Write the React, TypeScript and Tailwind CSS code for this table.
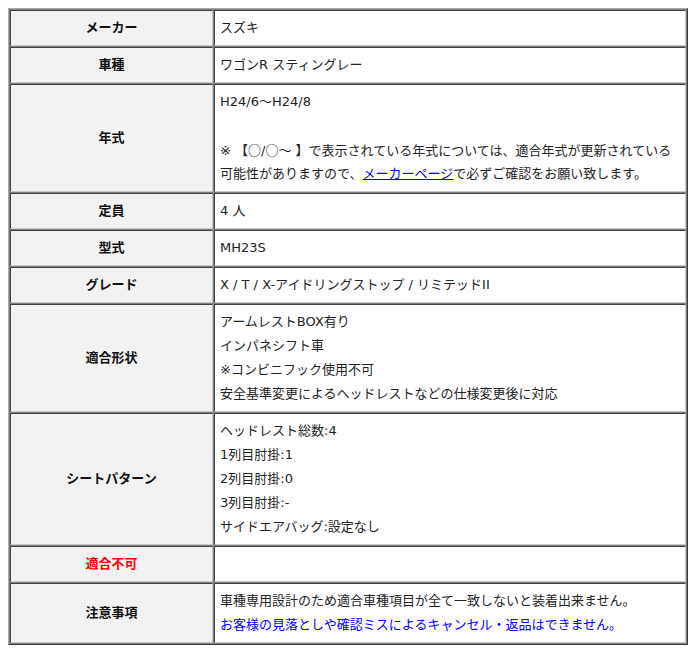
import React from "react";

const font = { fontFamily: '"DejaVu Sans", "Noto Sans CJK JP", sans-serif' };

function Row({
  label,
  children,
  red,
}: {
  label: string;
  children?: React.ReactNode;
  red?: boolean;
}) {
  return (
    <tr>
      <th
        className={`w-[203px] bg-[#f2f2f2] border border-t-[#404040] border-l-[#404040] border-b-[#c8c8c8] border-r-[#c8c8c8] px-[5px] py-[5px] text-center align-middle font-bold text-[13px] leading-[24px] ${
          red ? "text-[#ff0000]" : "text-[#111]"
        }`}
      >
        {label}
      </th>
      <td className="bg-white border border-t-[#404040] border-l-[#404040] border-b-[#c8c8c8] border-r-[#c8c8c8] pl-[5px] pr-[5px] py-[5px] align-middle text-[13px] leading-[24px] text-[#222] whitespace-nowrap">
        {children}
      </td>
    </tr>
  );
}

export default function App() {
  return (
    <div className="bg-white w-[700px] h-[652px] p-[8px]" style={font}>
      <table className="w-[680px] border-separate border-spacing-[1px] bg-[#808080] border border-t-[#a8a8a8] border-l-[#a8a8a8] border-b-[#3a3a3a] border-r-[#3a3a3a]">
        <tbody>
          <Row label="メーカー">スズキ</Row>
          <Row label="車種">ワゴンR スティングレー</Row>
          <Row label="年式">
            <div>H24/6～H24/8</div>
            <div>&nbsp;</div>
            <div className="h-[24px]">
              ※ 【
              <span className="[font-family:'Noto_Sans_CJK_JP',sans-serif]">○</span>/
              <span className="[font-family:'Noto_Sans_CJK_JP',sans-serif]">○</span>～ 】で表示されている年式については、適合年式が更新されている
            </div>
            <div>
              可能性がありますので、
              <a href="#" className="text-[#0000ee] underline">
                メーカーページ
              </a>
              で必ずご確認をお願い致します。
            </div>
          </Row>
          <Row label="定員">4 人</Row>
          <Row label="型式">MH23S</Row>
          <Row label="グレード">X / T / X-アイドリングストップ / リミテッドII</Row>
          <Row label="適合形状">
            <div>アームレストBOX有り</div>
            <div>インパネシフト車</div>
            <div>※コンビニフック使用不可</div>
            <div>安全基準変更によるヘッドレストなどの仕様変更後に対応</div>
          </Row>
          <Row label="シートパターン">
            <div>ヘッドレスト総数:4</div>
            <div>1列目肘掛:1</div>
            <div>2列目肘掛:0</div>
            <div>3列目肘掛:-</div>
            <div>サイドエアバッグ:設定なし</div>
          </Row>
          <Row label="適合不可" red>
            <div>&nbsp;</div>
          </Row>
          <Row label="注意事項">
            <div>車種専用設計のため適合車種項目が全て一致しないと装着出来ません。</div>
            <div className="text-[#0000ff]">
              お客様の見落としや確認ミスによるキャンセル・返品はできません。
            </div>
          </Row>
        </tbody>
      </table>
    </div>
  );
}
